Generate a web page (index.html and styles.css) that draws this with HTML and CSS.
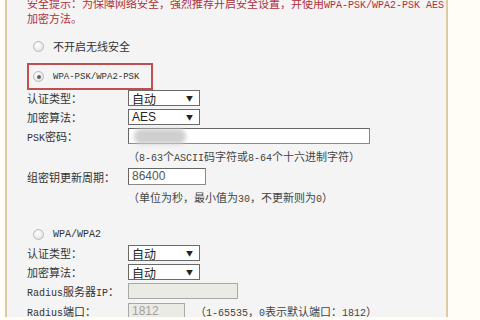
FILE: index.html
```html
<!DOCTYPE html>
<html lang="zh-CN">
<head>
    <meta charset="UTF-8">
    <title>无线安全设置</title>
    <link rel="stylesheet" href="styles.css">
</head>
<body>
    <div class="panel">
        <p class="tip">安全提示：为保障网络安全，强烈推荐开启安全设置，并使用<span class="en">WPA-PSK/WPA2-PSK AES</span>加密方法。</p>

        <div class="choice first">
            <span class="radio"></span>
            <span>不开启无线安全</span>
        </div>

        <div class="choice picked">
            <span class="radio on"></span>
            <span class="en">WPA-PSK/WPA2-PSK</span>
        </div>

        <div class="rows">
            <label>认证类型：</label>
            <div class="select"><span>自动</span><span class="arrow">▼</span></div>

            <label>加密算法：</label>
            <div class="select"><span class="latin">AES</span><span class="arrow">▼</span></div>

            <label><span class="en">PSK</span>密码：</label>
            <div class="field psk"><span class="blur"></span></div>

            <span></span>
            <div class="hint">（<span class="en">8-63</span>个<span class="en">ASCII</span>码字符或<span class="en">8-64</span>个十六进制字符）</div>

            <label>组密钥更新周期：</label>
            <div class="field period">86400</div>

            <span></span>
            <div class="hint">（单位为秒，最小值为<span class="en">30</span>，不更新则为<span class="en">0</span>）</div>
        </div>

        <div class="choice second">
            <span class="radio"></span>
            <span class="en">WPA/WPA2</span>
        </div>

        <div class="rows tight">
            <label>认证类型：</label>
            <div class="select"><span>自动</span><span class="arrow">▼</span></div>

            <label>加密算法：</label>
            <div class="select"><span>自动</span><span class="arrow">▼</span></div>

            <label><span class="en">Radius</span>服务器<span class="en">IP</span>：</label>
            <div class="field off server"></div>

            <label><span class="en">Radius</span>端口：</label>
            <div class="port">
                <div class="field off portbox">1812</div>
                <span class="hint">（<span class="en">1-65535</span>，<span class="en">0</span>表示默认端口：<span class="en">1812</span>）</span>
            </div>
        </div>
    </div>
</body>
</html>
```

FILE: styles.css
```css
body {
    margin: 0;
    background: #fffdf6;
    font-family: "Noto Sans CJK SC", "Liberation Sans", sans-serif;
    font-size: 11px;
    color: #333;
    overflow: hidden;
}
.panel {
    margin-left: 5px;
    width: 419px;
    height: 320px;
    padding-left: 20px;
    background: #f4f4f4;
    border-left: 2px solid #dccaa2;
    border-right: 2px solid #dccaa2;
}
.en {
    font-family: "Liberation Mono", monospace;
    font-size: 10px;
}
.tip {
    margin: -3px 0 0 0;
    color: #b0303a;
    line-height: 13px;
}
.choice {
    display: flex;
    align-items: center;
    gap: 9px;
    height: 14px;
    padding-left: 6px;
}
.choice.first {
    margin-top: 14px;
}
.choice.picked {
    margin-top: 10px;
    width: 118px;
    height: 23px;
    border: 2px solid #c24f4f;
    padding-left: 4px;
}
.choice.picked .en {
    font-size: 9px;
}
.choice.second {
    margin-top: 21px;
}
.radio {
    width: 9px;
    height: 9px;
    border-radius: 50%;
    border: 1px solid #b8b8b8;
    background: radial-gradient(circle at 40% 35%, #fff, #dcdcdc);
    display: flex;
    align-items: center;
    justify-content: center;
}
.radio.on::after {
    content: "";
    width: 4px;
    height: 4px;
    border-radius: 50%;
    background: #606060;
}
.rows {
    display: grid;
    grid-template-columns: 101px auto;
    row-gap: 3px;
    align-items: center;
    justify-items: start;
}
.rows.tight {
    margin-top: 4px;
}
.select {
    box-sizing: border-box;
    width: 72px;
    height: 16px;
    border: 1px solid #6a6a6a;
    background: #fff;
    display: flex;
    align-items: center;
    justify-content: space-between;
    padding: 0 6px 0 3px;
    font-size: 12px;
    color: #222;
}
.latin {
    font-family: "Liberation Sans", sans-serif;
}
.arrow {
    font-size: 7px;
}
.field {
    box-sizing: border-box;
    height: 16px;
    border: 1px solid #8a8a8a;
    border-top-color: #666;
    border-left-color: #666;
    background: #fff;
    font-family: "Liberation Sans", sans-serif;
    font-size: 12px;
    line-height: 14px;
    padding-left: 3px;
    color: #555;
}
.psk {
    width: 242px;
    position: relative;
}
.blur {
    position: absolute;
    left: 5px;
    top: 0;
    width: 52px;
    height: 15px;
    border-radius: 7px;
    background: #cfcfcf;
    filter: blur(2px);
}
.period {
    width: 78px;
    height: 17px;
}
.hint {
    height: 18px;
    line-height: 18px;
    color: #444;
}
.off {
    background: #ebebe6;
    border-color: #a8a8a8;
    color: #a0a0a0;
}
.server {
    width: 110px;
}
.port {
    display: flex;
    align-items: center;
    gap: 10px;
}
.portbox {
    width: 57px;
}
```
